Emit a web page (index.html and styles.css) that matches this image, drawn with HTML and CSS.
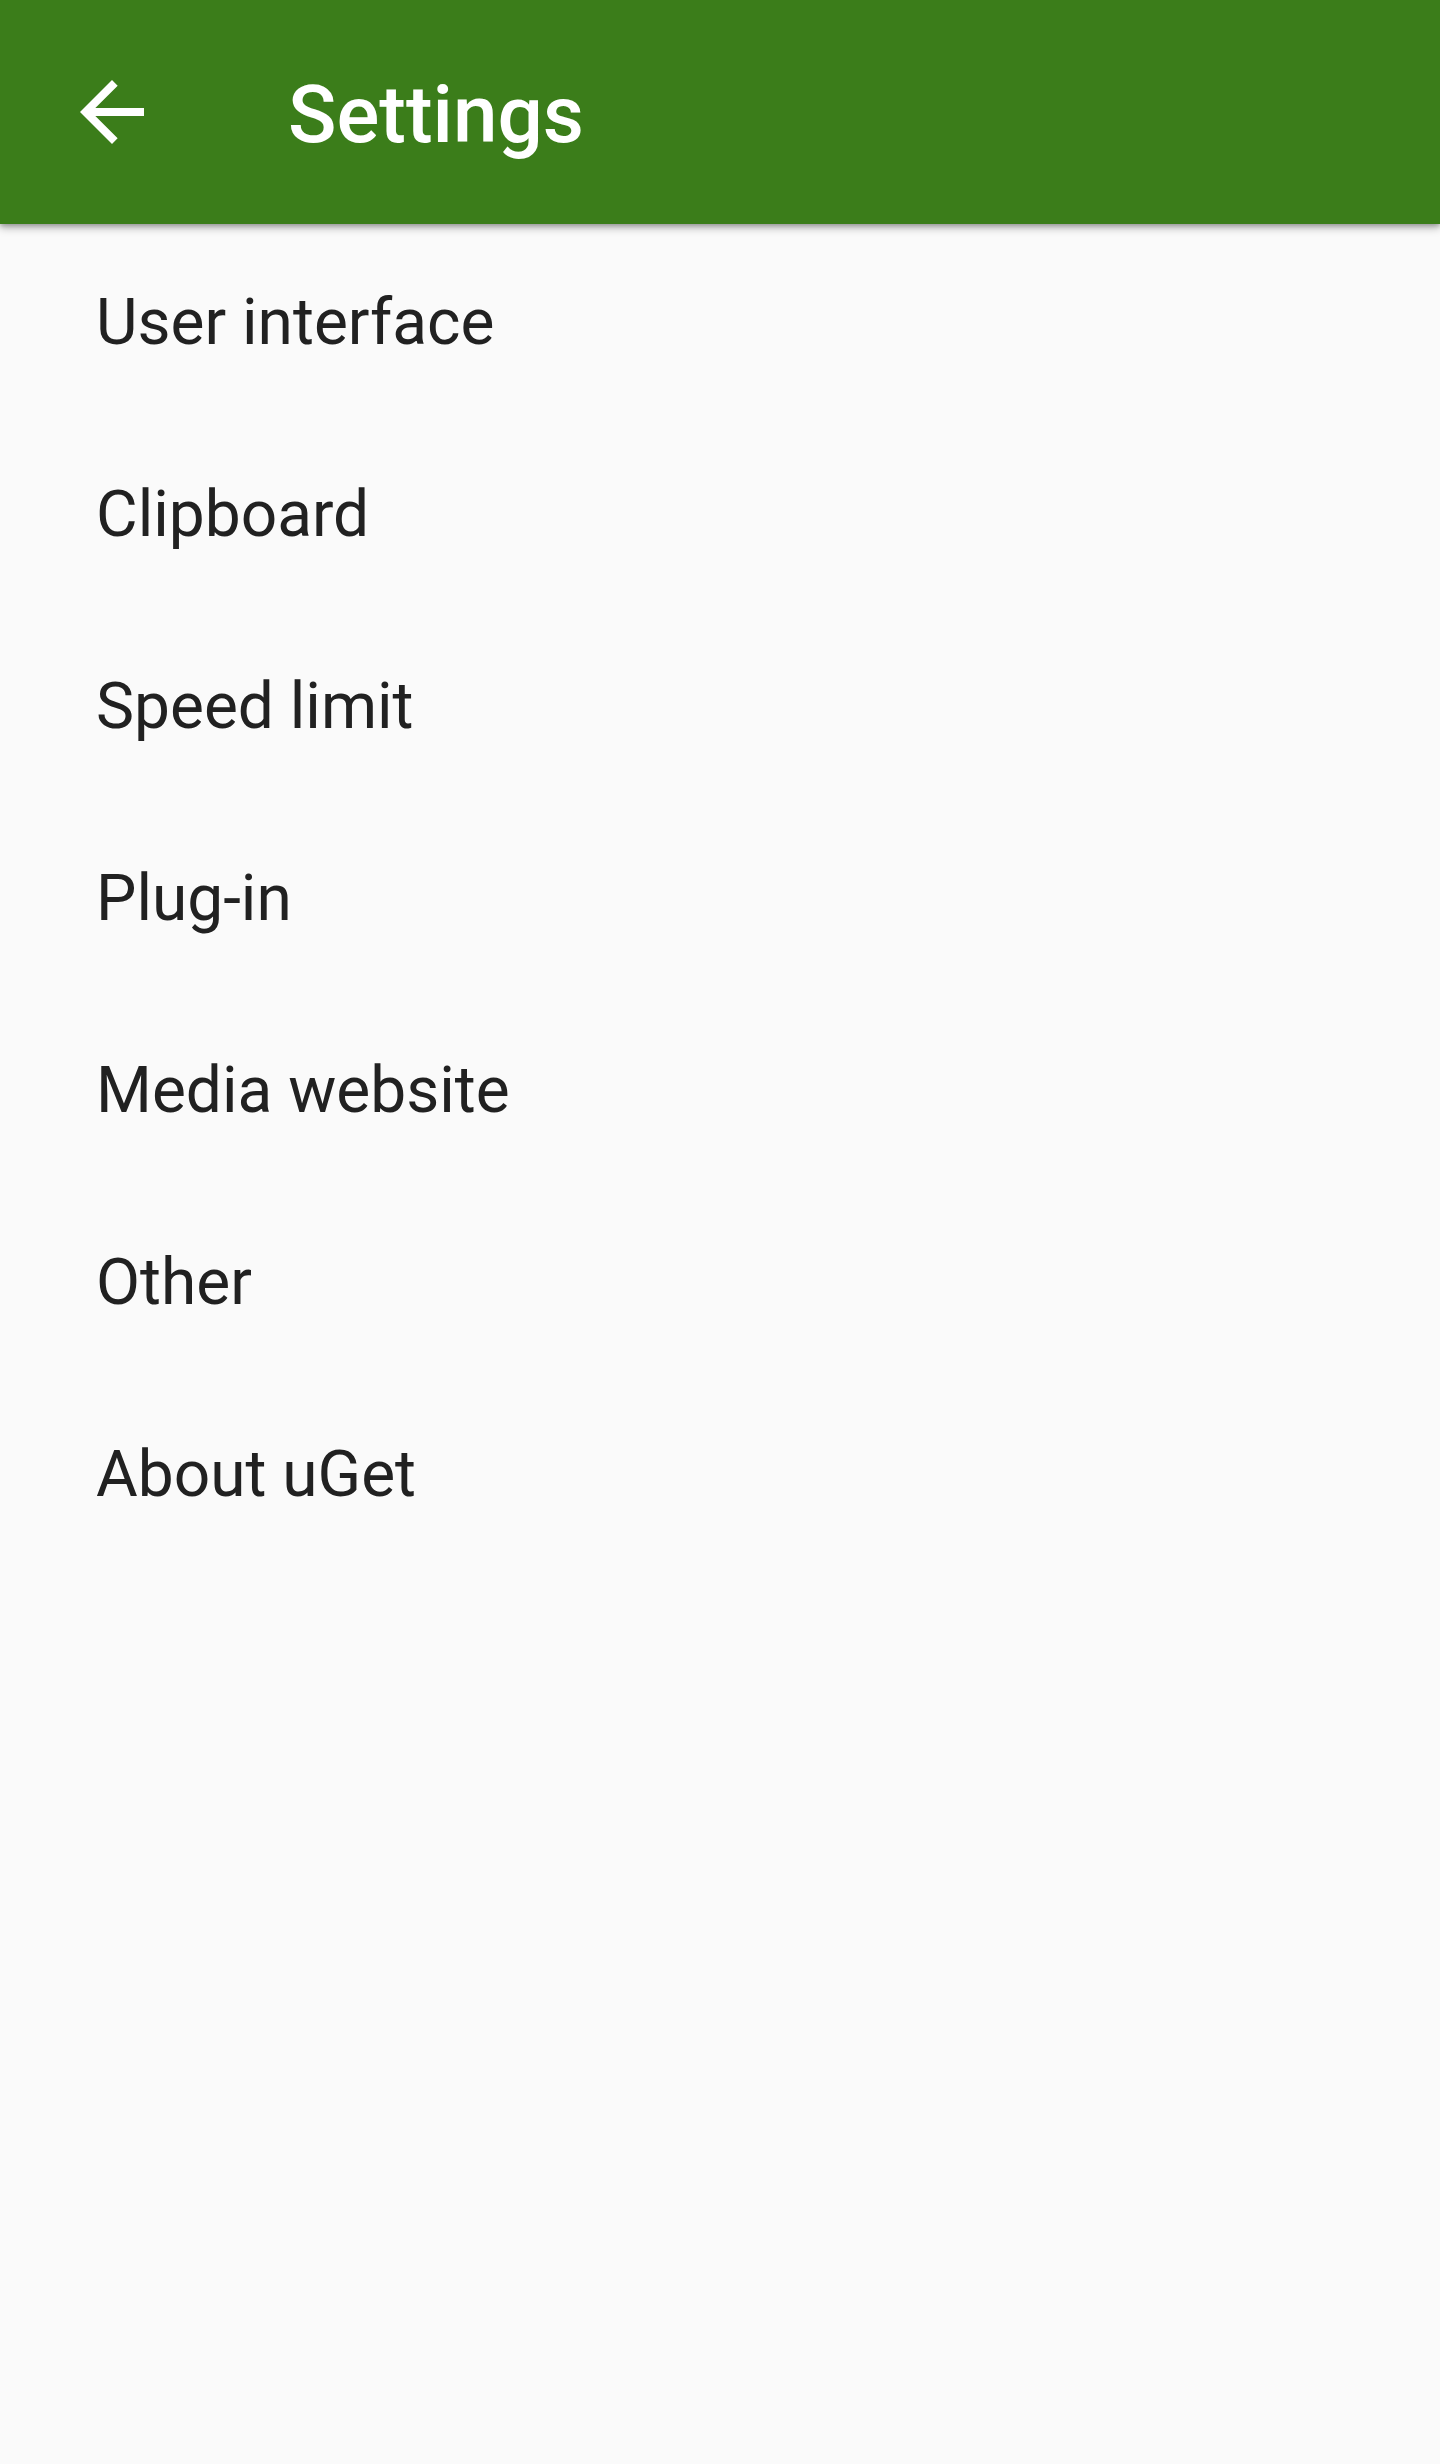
FILE: index.html
```html
<!DOCTYPE html>
<html lang="en">
<head>
<meta charset="utf-8">
<title>Settings</title>
<link rel="stylesheet" href="styles.css">
</head>
<body>
<div class="screen">
  <header class="toolbar">
    <button class="nav-btn" aria-label="Navigate up">
      <svg class="nav-icon" viewBox="0 0 24 24" width="96" height="96"><path fill="#ffffff" d="M20 11H7.83l5.59-5.59L12 4l-8 8 8 8 1.41-1.41L7.83 13H20v-2z"/></svg>
    </button>
    <h1 class="title">Settings</h1>
  </header>
  <ul class="pref-list">
    <li class="pref-item">User interface</li>
    <li class="pref-item">Clipboard</li>
    <li class="pref-item">Speed limit</li>
    <li class="pref-item">Plug-in</li>
    <li class="pref-item">Media website</li>
    <li class="pref-item">Other</li>
    <li class="pref-item">About uGet</li>
  </ul>
</div>
</body>
</html>
```

FILE: styles.css
```css
* { box-sizing: border-box; }
html, body {
  margin: 0;
  padding: 0;
  background: #fafafa;
}
body {
  font-family: Roboto, "Noto Sans", "Liberation Sans", sans-serif;
  width: 1440px;
  height: 2464px;
  overflow: hidden;
}
.screen {
  display: flex;
  flex-direction: column;
  min-height: 2464px;
  background: #fafafa;
}
.toolbar {
  position: relative;
  z-index: 2;
  height: 224px;
  background: #3b7d1a;
  display: flex;
  align-items: center;
  padding-left: 64px;
  box-shadow: 0 4px 8px rgba(0,0,0,0.28), 0 2px 4px rgba(0,0,0,0.18);
}
.nav-btn {
  width: 96px;
  height: 96px;
  padding: 0;
  margin: 0;
  border: 0;
  background: transparent;
  display: flex;
}
.nav-icon { display: block; }
.title {
  margin: 6px 0 0 128px;
  color: #ffffff;
  font-size: 80px;
  font-weight: 500;
  line-height: 1;
}
.pref-list {
  list-style: none;
  margin: 0;
  padding: 0;
}
.pref-item {
  height: 192px;
  display: flex;
  align-items: center;
  padding-left: 96px;
  padding-top: 6px;
  font-size: 64px;
  color: #212121;
  line-height: 1.2;
}
```
